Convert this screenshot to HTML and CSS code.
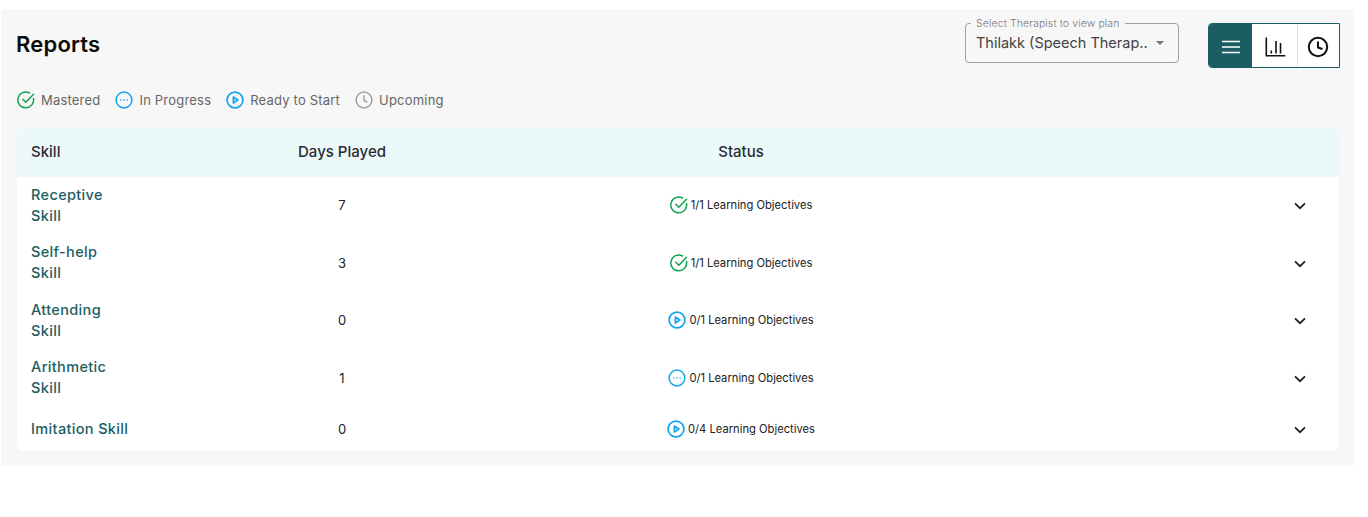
FILE: index.html
```html
<!DOCTYPE html>
<html lang="en">
<head>
<meta charset="utf-8">
<title>Reports</title>
<link rel="stylesheet" href="styles.css">
</head>
<body>
<main class="panel">
  <header class="top">
    <h1 class="title">Reports</h1>
    <div class="controls">
      <div class="select">
        <span class="select-label">Select Therapist to view plan</span>
        <span class="select-value">Thilakk (Speech Therap..</span>
        <span class="caret"></span>
      </div>
      <div class="views">
        <button class="view active"><svg width="24" height="24" viewBox="0 0 24 24"><path d="M3 6.500h18M3 12h18M3 17.500h18" stroke="#fff" stroke-width="1.700" fill="none"/></svg></button>
        <button class="view mid"><svg width="24" height="24" viewBox="0 0 24 24" fill="none" stroke="#111" stroke-width="1.600"><path d="M3.300 2.500v18.300h19"/><path d="M8.300 15.500v3M13 6v12.500M17.500 8v10.500"/></svg></button>
        <button class="view clock"><svg width="24" height="24" viewBox="0 0 24 24" fill="none" stroke="#111" stroke-width="2"><circle cx="12" cy="12" r="9.200"/><path d="M12 6.500V12.500l4.500 1.500"/></svg></button>
      </div>
    </div>
  </header>

  <div class="legend">
    <span class="legend-item"><svg class="ic" viewBox="0 0 18 18"><use href="#i-done"/></svg>Mastered</span>
    <span class="legend-item"><svg class="ic" viewBox="0 0 18 18"><use href="#i-prog"/></svg>In Progress</span>
    <span class="legend-item"><svg class="ic" viewBox="0 0 18 18"><use href="#i-play"/></svg>Ready to Start</span>
    <span class="legend-item"><svg class="ic" viewBox="0 0 18 18"><use href="#i-up"/></svg>Upcoming</span>
  </div>

  <section class="table">
    <div class="row head">
      <div class="c-skill">Skill</div><div class="c-days">Days Played</div><div class="c-status">Status</div><div></div>
    </div>
    <div class="row body">
      <div class="c-skill name">Receptive Skill</div><div class="c-days num">7</div>
      <div class="c-status obj"><svg class="ic" viewBox="0 0 18 18"><use href="#i-done"/></svg>1/1 Learning Objectives</div>
      <div class="c-more"><svg class="chev" viewBox="0 0 12 8"><path d="M1 1.300 6 6.200 11 1.300"/></svg></div>
    </div>
    <div class="row body">
      <div class="c-skill name">Self-help Skill</div><div class="c-days num">3</div>
      <div class="c-status obj"><svg class="ic" viewBox="0 0 18 18"><use href="#i-done"/></svg>1/1 Learning Objectives</div>
      <div class="c-more"><svg class="chev" viewBox="0 0 12 8"><path d="M1 1.300 6 6.200 11 1.300"/></svg></div>
    </div>
    <div class="row body">
      <div class="c-skill name">Attending Skill</div><div class="c-days num">0</div>
      <div class="c-status obj"><svg class="ic" viewBox="0 0 18 18"><use href="#i-play"/></svg>0/1 Learning Objectives</div>
      <div class="c-more"><svg class="chev" viewBox="0 0 12 8"><path d="M1 1.300 6 6.200 11 1.300"/></svg></div>
    </div>
    <div class="row body">
      <div class="c-skill name">Arithmetic Skill</div><div class="c-days num">1</div>
      <div class="c-status obj"><svg class="ic" viewBox="0 0 18 18"><use href="#i-prog"/></svg>0/1 Learning Objectives</div>
      <div class="c-more"><svg class="chev" viewBox="0 0 12 8"><path d="M1 1.300 6 6.200 11 1.300"/></svg></div>
    </div>
    <div class="row body last">
      <div class="c-skill name">Imitation Skill</div><div class="c-days num">0</div>
      <div class="c-status obj"><svg class="ic" viewBox="0 0 18 18"><use href="#i-play"/></svg>0/4 Learning Objectives</div>
      <div class="c-more"><svg class="chev" viewBox="0 0 12 8"><path d="M1 1.300 6 6.200 11 1.300"/></svg></div>
    </div>
  </section>
</main>

<svg class="defs" width="0" height="0">
  <symbol id="i-done" viewBox="0 0 18 18"><path d="M16.500 7.500A7.900 7.900 0 1 1 12.500 2" fill="none" stroke="#12a150" stroke-width="1.500" stroke-linecap="round"/><path d="M5.800 8.300 8.800 11.300 16.500 3.300" fill="none" stroke="#12a150" stroke-width="1.500" stroke-linecap="round" stroke-linejoin="round"/></symbol>
  <symbol id="i-prog" viewBox="0 0 18 18"><circle cx="9" cy="9" r="7.900" fill="none" stroke="#12a5ee" stroke-width="1.500"/><circle cx="5.800" cy="9" r=".8" fill="#12a5ee"/><circle cx="9" cy="9" r=".8" fill="#12a5ee"/><circle cx="12.200" cy="9" r=".8" fill="#12a5ee"/></symbol>
  <symbol id="i-play" viewBox="0 0 18 18"><circle cx="9" cy="9" r="7.900" fill="none" stroke="#12a5ee" stroke-width="1.700"/><path d="M7.300 5.900 12 9 7.300 12.100Z" fill="#a9defa" stroke="#12a5ee" stroke-width="1.500" stroke-linejoin="round"/></symbol>
  <symbol id="i-up" viewBox="0 0 18 18"><circle cx="9" cy="9" r="7.900" fill="none" stroke="#a0a0a0" stroke-width="1.500"/><path d="M9 4.800V9.500l3 1.500" fill="none" stroke="#a0a0a0" stroke-width="1.500" stroke-linecap="round"/></symbol>
</svg>
</body>
</html>
```
FILE: styles.css
```css
* { box-sizing: border-box; }
html, body { margin: 0; background: #fff; }
body { font-family: Inter, "Liberation Sans", sans-serif; color: #222; overflow: hidden; }
.defs { position: absolute; }

.panel {
  margin: 9px 14px 0 1px;
  height: 457px;
  background: #f7f7f7;
  padding: 14px 14px 15px 15px;
  display: flex;
  flex-direction: column;
}
.top { display: flex; justify-content: space-between; align-items: flex-start; height: 63px; }
.title { margin: 8px 0 0; font-size: 22px; line-height: 26px; font-weight: 600; letter-spacing: .2px; color: #0c0c0c; }
.controls { display: flex; gap: 29px; align-items: flex-start; }

.select {
  position: relative;
  width: 214px;
  height: 40px;
  border: 1px solid #a0a0a0;
  border-radius: 4px;
  display: flex;
  align-items: center;
  padding: 0 10px;
}
.select-label {
  position: absolute;
  top: -7px;
  left: 5px;
  padding: 0 5px;
  background: #f7f7f7;
  font-size: 10.500px;
  line-height: 13px;
  font-weight: 300;
  letter-spacing: .1px;
  color: #777;
  white-space: nowrap;
}
.select-value { font-size: 14.500px; line-height: 18px; margin-top: -1px; color: #444; white-space: nowrap; flex: 1; }
.caret { width: 0; height: 0; border-left: 4px solid transparent; border-right: 4px solid transparent; border-top: 4px solid #777; margin-right: 4px; }

.views { display: flex; width: 132px; height: 45px; border: 1px solid #1a5e63; border-radius: 4px 0 0 4px; background: #fff; }
.view { flex: 1; padding: 3px 0 0; border: 0; background: #fff; display: flex; align-items: center; justify-content: center; }
.view.mid { flex: 0 0 46px; border-right: 1px solid #ddd; }
.view.clock { padding-right: 1px; }
.view.active { background: #1a5e63; border-radius: 3px 0 0 3px; flex: 0 0 43px; }

.legend { display: flex; align-items: center; gap: 15px; height: 27px; margin: 1px 0 0 1px; padding-bottom: 1px; font-size: 13px; letter-spacing: .2px; color: #666; }
.legend-item { display: flex; align-items: center; gap: 6px; }
.ic { width: 18px; height: 18px; flex: none; }

.table { margin: 13px 0 0 1px; background: #fff; border-radius: 6px; overflow: hidden; width: 1322px; }
.row { display: grid; grid-template-columns: 229px 192px 606px 1fr; align-items: center; }
.head { height: 50px; padding-bottom: 2px; background: #ecf9f9; font-size: 15px; font-weight: 500; color: #2b2b33; }
.body { height: 57.500px; }
.body.last { height: 44px; }
.c-skill { padding-left: 14px; }
.c-days, .c-status { text-align: center; }
.name { font-size: 14.500px; line-height: 21px; padding-bottom: 2px; font-weight: 500; letter-spacing: .35px; color: #1a5e63; max-width: 113px; }
.num { font-size: 13px; padding-bottom: 1px; color: #222; }
.obj { display: flex; align-items: center; justify-content: center; gap: 3px; padding-bottom: 1px; font-size: 11.200px; color: #222; }
.c-more { display: flex; justify-content: flex-end; padding: 1px 33px 0 0; }
.chev { width: 12px; height: 8px; fill: none; stroke: #222; stroke-width: 1.800; }
```
